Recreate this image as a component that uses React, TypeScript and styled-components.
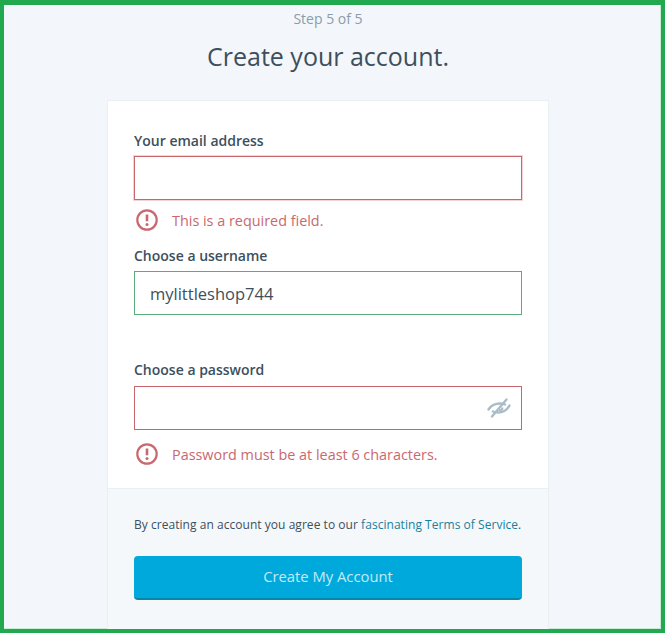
import React from "react";
import styled, { createGlobalStyle } from "styled-components";

const Global = createGlobalStyle`
  html, body { margin: 0; padding: 0; background: #f3f6f9; }
  * { box-sizing: border-box; }
`;

const Frame = styled.main`
  width: 665px;
  height: 633px;
  overflow: hidden;
  border: solid #22a94f;
  border-width: 5px 4px 4px 4px;
  padding-right: 9px;
  background: #f3f6fa;
  box-shadow: inset -1px -1px 0 #c6ead2;
  font-family: "Open Sans", "Noto Sans", sans-serif;
  display: flex;
  flex-direction: column;
  align-items: center;
  color: #3d4f5c;
`;

const Step = styled.div`
  margin-top: 4px;
  height: 20px;
  line-height: 20px;
  font-size: 14px;
  color: #8b9dab;
`;

const Title = styled.h1`
  margin: 7px 0 0;
  height: 40px;
  line-height: 40px;
  font-size: 25px;
  font-weight: 400;
  color: #3d4f5c;
`;

const Card = styled.section`
  margin-top: 25px;
  width: 440px;
  flex: 1;
  display: flex;
  flex-direction: column;
  background: #f5f8fa;
  box-shadow: 0 0 0 1px #e9eff3;
`;

const Body = styled.div`
  background: #fff;
  height: 388px;
  padding: 30px 26px 0;
  border-bottom: 1px solid #e9eff3;
`;

const Field = styled.div<{ $slot: number }>`
  height: ${(p) => p.$slot}px;
`;

const Label = styled.label<{ $gap: number }>`
  display: block;
  height: 20px;
  line-height: 20px;
  margin-bottom: ${(p) => p.$gap}px;
  font-size: 14px;
  font-weight: 600;
  color: #3d4f5c;
`;

const InputBox = styled.div<{ $state: "error" | "ok" }>`
  position: relative;
  height: 44px;
  display: flex;
  align-items: center;
  padding: 0 15px;
  background: #fff;
  font-size: 16.5px;
  color: #3d4f5c;
  border: 1px solid ${(p) => (p.$state === "error" ? "#c9666c" : "#5bab7c")};
`;

const GlowBox = styled(InputBox)`
  box-shadow: 0 0 0 1px #f3d3d5;
`;

const EyeSlot = styled.span`
  position: absolute;
  right: 9px;
  top: 9px;
  display: flex;
`;

const Message = styled.div<{ $top: number }>`
  display: flex;
  align-items: center;
  gap: 13px;
  margin-top: ${(p) => p.$top}px;
  padding-left: 1px;
  height: 24px;
  font-size: 14.4px;
  color: #c9686f;
`;

const Footer = styled.div`
  padding: 26px 26px 0;
`;

const Terms = styled.p`
  margin: 0;
  height: 20px;
  line-height: 20px;
  font-size: 12px;
  letter-spacing: 0.04px;
  color: #3d4f5c;
  white-space: nowrap;
`;

const TermsLink = styled.a`
  color: #1a7f9e;
`;

const Submit = styled.button`
  display: block;
  width: 388px;
  height: 44px;
  margin-top: 21px;
  padding: 0 0 2px;
  border: 0;
  border-bottom: 2px solid #0a85ab;
  border-radius: 4px;
  background: #00a9dc;
  color: #c4eaf7;
  font-family: inherit;
  font-size: 14.8px;
`;

const AlertIcon = () => (
  <svg width="24" height="24" viewBox="0 0 24 24" fill="none" aria-hidden="true">
    <circle cx="12" cy="12" r="9.7" stroke="#c9686f" strokeWidth="2.2" />
    <path d="M12 6.5v6.8" stroke="#c9686f" strokeWidth="2.6" />
    <circle cx="12" cy="16.6" r="1.5" fill="#c9686f" />
  </svg>
);

const EyeOffIcon = () => (
  <svg width="26" height="24" viewBox="0 0 26 24" fill="none" aria-hidden="true">
    <path
      d="M2.500 13.500C5 9.500 9 7.500 14 7.500c2 0 3.500.3 5 1M23.500 9.500C21 14 17 16.500 12 16.500c-2 0-3.500-.3-5-1"
      stroke="#a9bcc8"
      strokeWidth="2.400"
      strokeLinecap="round"
    />
    <path d="M6 20.500 20.500 3.500" stroke="#a9bcc8" strokeWidth="2.400" strokeLinecap="round" />
    <path d="M16.500 11.500c0 2-1.500 3-3.500 3" stroke="#a9bcc8" strokeWidth="2" />
  </svg>
);

export default function App() {
  return (
    <>
      <Global />
      <Frame>
        <Step>Step 5 of 5</Step>
        <Title>Create your account.</Title>
        <Card>
          <Body>
            <Field $slot={115}>
              <Label $gap={5}>Your email address</Label>
              <GlowBox $state="error" />
              <Message $top={8}>
                <AlertIcon />
                <span>This is a required field.</span>
              </Message>
            </Field>
            <Field $slot={114}>
              <Label $gap={5}>Choose a username</Label>
              <InputBox $state="ok">mylittleshop744</InputBox>
            </Field>
            <Field $slot={115}>
              <Label $gap={6}>Choose a password</Label>
              <InputBox $state="error">
                <EyeSlot>
                  <EyeOffIcon />
                </EyeSlot>
              </InputBox>
              <Message $top={12}>
                <AlertIcon />
                <span>Password must be at least 6 characters.</span>
              </Message>
            </Field>
          </Body>
          <Footer>
            <Terms>
              By creating an account you agree to our{" "}
              <TermsLink>fascinating Terms of Service</TermsLink>.
            </Terms>
            <Submit>Create My Account</Submit>
          </Footer>
        </Card>
      </Frame>
    </>
  );
}
